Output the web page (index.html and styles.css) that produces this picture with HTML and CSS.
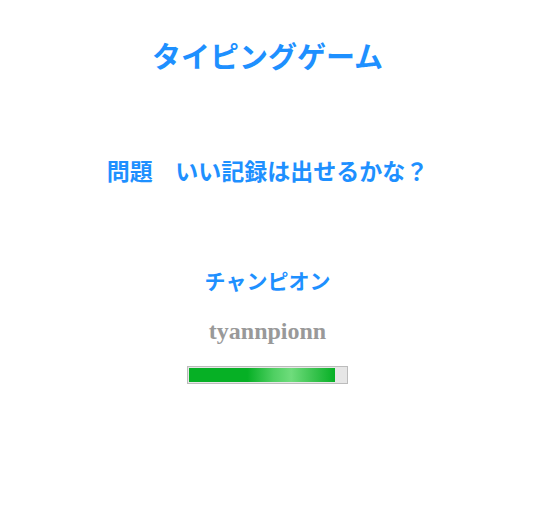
FILE: index.html
```html
<!DOCTYPE html>
<html lang="ja">
<head>
<meta charset="utf-8">
<link rel="stylesheet" href="styles.css">
</head>
<body>
<main class="page">
  <h1 class="title">タイピングゲーム</h1>
  <h2 class="question">問題  いい記録は出せるかな？</h2>
  <p class="rank">チャンピオン</p>
  <p class="word">tyannpionn</p>
  <div class="bar"><div class="bar-fill" style="width: 92%"></div></div>
</main>
</body>
</html>
```
FILE: styles.css
```css
html, body {
  margin: 0;
  padding: 0;
  background: #ffffff;
}
.page {
  width: 535px;
  display: flex;
  flex-direction: column;
  align-items: center;
  font-family: "Noto Sans CJK JP", "Noto Sans", sans-serif;
  color: #1e90ff;
}
.title {
  margin: 34px 0 0;
  font-size: 29px;
  line-height: 42px;
  font-weight: 700;
}
.question {
  margin: 77px 0 0;
  font-size: 23px;
  line-height: 34px;
  font-weight: 700;
  white-space: pre;
  word-spacing: 6px;
}
.rank {
  margin: 78px 0 0;
  font-size: 21px;
  line-height: 30px;
  font-weight: 700;
}
.word {
  margin: 22px 0 0;
  font-family: "Liberation Serif", serif;
  font-size: 24px;
  line-height: 28px;
  font-weight: 700;
  color: #999999;
}
.bar {
  margin-top: 21px;
  width: 159px;
  height: 16px;
  border: 1px solid #bcbcbc;
  background: #e6e6e6;
  padding: 0;
  box-sizing: content-box;
}
.bar-fill {
  height: 14px;
  margin: 1px;
  background: linear-gradient(90deg, #06b025 0%, #06b025 40%, #4fcf62 58%, #6fdc7c 70%, #3bc450 85%, #06b025 100%);
}
```
